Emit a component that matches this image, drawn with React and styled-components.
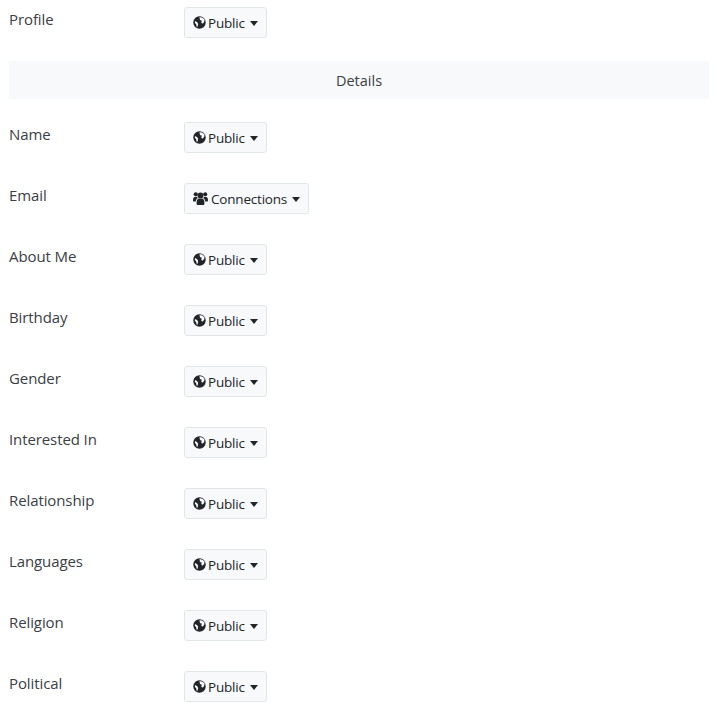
import React from 'react';
import styled, { createGlobalStyle } from 'styled-components';

const GlobalStyle = createGlobalStyle`
  html, body {
    margin: 0;
    padding: 0;
    background: #fff;
  }
  body {
    font-family: "Open Sans", "Noto Sans", "Liberation Sans", sans-serif;
    color: #212529;
    overflow: hidden;
  }
`;

const Page = styled.div`
  width: 717px;
  height: 714px;
  padding: 7px 8px 0 9px;
  box-sizing: border-box;
  overflow: hidden;
`;

const Row = styled.div`
  display: flex;
  align-items: flex-start;
  height: 31px;
  margin-bottom: 30px;
`;

const Label = styled.div`
  width: 175px;
  font-size: 15px;
  line-height: 24px;
  letter-spacing: -0.1px;
  color: #3b4045;
`;

const PrivacyButton = styled.button`
  display: inline-flex;
  align-items: center;
  height: 31px;
  padding: 0 8px;
  box-sizing: border-box;
  border: 1px solid #e3e6e9;
  border-radius: 3px;
  background: #f8f9fa;
  color: #212529;
  font-family: inherit;
  font-size: 13.5px;
  letter-spacing: -0.2px;
`;

const Icon = styled.svg`
  flex: none;
  margin-right: ${(props) => props.$gap}px;
`;

const Caret = styled.span`
  width: 0;
  height: 0;
  margin: 1px 0 0 5px;
  border-top: 5px solid #212529;
  border-left: 4.5px solid transparent;
  border-right: 4.5px solid transparent;
`;

const SectionHeader = styled.div`
  height: 38px;
  margin: -7px 0 23px;
  background: #f8f9fa;
  font-size: 14.5px;
  line-height: 40px;
  text-align: center;
  color: #3b4045;
`;

const GlobeIcon = () => (
  <Icon $gap={2} width="13" height="13" viewBox="0 0 13 13">
    <circle cx="6.5" cy="6.5" r="6.2" fill="#212529" />
    <path d="M6.4 1.3 C8.2 .9 10.6 1.8 11.5 3.6 L11.2 6 L9.4 7.8 L8.2 6.6 L8.8 4.8 L7 4 Z" fill="#f8f9fa" />
    <path d="M2.2 5 L4.2 6.2 L5.2 8 L4.4 11 L3.6 10.4 L3.2 8.2 L1.8 6.8 Z" fill="#f8f9fa" />
  </Icon>
);

const UsersIcon = () => (
  <Icon $gap={3} width="15" height="13" viewBox="0 0 15 13">
    <circle cx="7.5" cy="3.4" r="2.9" fill="#212529" />
    <circle cx="2.8" cy="2.3" r="2.1" fill="#212529" />
    <circle cx="12.2" cy="2.3" r="2.1" fill="#212529" />
    <path d="M3.6 11.8 C3.4 8.6 4.2 6.6 6 6.4 L9 6.4 C10.8 6.6 11.6 8.6 11.4 11.8 C11.3 12.6 10.8 13 10.2 13 L4.8 13 C4.2 13 3.7 12.6 3.6 11.8 Z" fill="#212529" />
    <path d="M0 8.2 C0 6 .8 5 1.8 5 L4 5 C4.2 5.4 4.5 5.9 4.9 6.1 C3.6 6.7 2.9 8 2.8 9.5 L1 9.5 C.4 9.5 0 9 0 8.2 Z" fill="#212529" />
    <path d="M15 8.2 C15 6 14.2 5 13.2 5 L11 5 C10.8 5.4 10.5 5.9 10.1 6.1 C11.4 6.7 12.1 8 12.2 9.5 L14 9.5 C14.6 9.5 15 9 15 8.2 Z" fill="#212529" />
  </Icon>
);

const Privacy = ({ level }) => (
  <PrivacyButton>
    {level === 'Connections' ? <UsersIcon /> : <GlobeIcon />}
    {level}
    <Caret />
  </PrivacyButton>
);

const details = [
  ['Name', 'Public'],
  ['Email', 'Connections'],
  ['About Me', 'Public'],
  ['Birthday', 'Public'],
  ['Gender', 'Public'],
  ['Interested In', 'Public'],
  ['Relationship', 'Public'],
  ['Languages', 'Public'],
  ['Religion', 'Public'],
  ['Political', 'Public'],
];

const App = () => (
  <Page>
    <GlobalStyle />
    <Row>
      <Label>Profile</Label>
      <Privacy level="Public" />
    </Row>
    <SectionHeader>Details</SectionHeader>
    {details.map(([name, level]) => (
      <Row key={name}>
        <Label>{name}</Label>
        <Privacy level={level} />
      </Row>
    ))}
  </Page>
);

export default App;
